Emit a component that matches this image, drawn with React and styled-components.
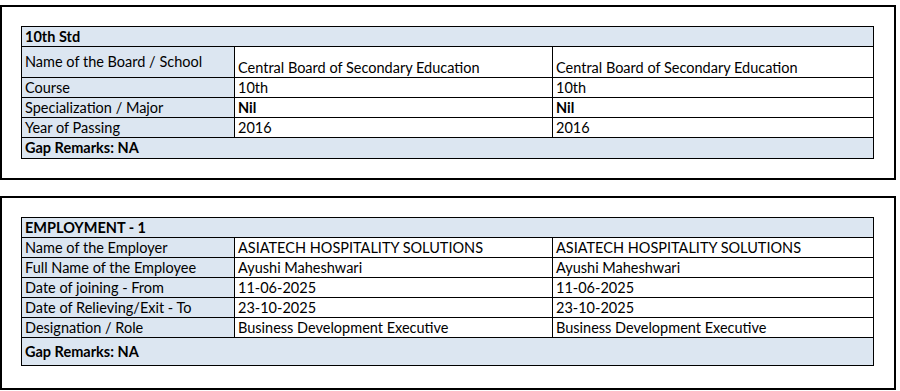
import React from "react";
import styled, { createGlobalStyle } from "styled-components";

const GlobalStyle = createGlobalStyle`
  html, body {
    margin: 0;
    padding: 0;
    background: #ffffff;
  }
  body {
    font-family: Lato, "Liberation Sans", sans-serif;
    color: #000;
  }
`;

const Page = styled.div`
  padding-top: 5px;
  width: 896px;
  display: flex;
  flex-direction: column;
  gap: 16px;
`;

const Section = styled.div`
  border: 2px solid #000;
  padding: ${(p) => p.$pad};
`;

const Table = styled.table`
  border-collapse: collapse;
  table-layout: fixed;
  width: 852px;
  font-size: 14.5px;
  line-height: 18px;
`;

const Head = styled.td`
  background: #dce6f1;
  border: 1px solid #000;
  font-weight: 700;
  padding: 0 3px;
  height: ${(p) => p.$h || 19}px;
  vertical-align: ${(p) => p.$va || "middle"};
`;

const Label = styled.td`
  background: #dce6f1;
  border: 1px solid #000;
  padding: 0 3px;
  height: ${(p) => p.$h || 19}px;
  vertical-align: ${(p) => p.$va || "middle"};
  white-space: nowrap;
`;

const LabelText = styled.div`
  padding-top: ${(p) => (p.$tall ? 6 : 0)}px;
`;

const Value = styled.td`
  border: 1px solid #000;
  padding: 0 3px;
  height: ${(p) => p.$h || 19}px;
  vertical-align: ${(p) => p.$va || "middle"};
  font-weight: ${(p) => (p.$bold ? 700 : 400)};
  white-space: nowrap;
`;

const education = [
  { label: "Name of the Board / School", value: "Central Board of Secondary Education", tall: true },
  { label: "Course", value: "10th" },
  { label: "Specialization / Major", value: "Nil", bold: true },
  { label: "Year of Passing", value: "2016" },
];

const employment = [
  { label: "Name of the Employer", value: "ASIATECH HOSPITALITY SOLUTIONS" },
  { label: "Full Name of the Employee", value: "Ayushi Maheshwari" },
  { label: "Date of joining - From", value: "11-06-2025" },
  { label: "Date of Relieving/Exit - To", value: "23-10-2025" },
  { label: "Designation / Role", value: "Business Development Executive" },
];

function DetailTable({ title, rows, gapHeight }) {
  return (
    <Table>
      <colgroup>
        <col style={{ width: 213 }} />
        <col style={{ width: 318 }} />
        <col style={{ width: 321 }} />
      </colgroup>
      <tbody>
        <tr>
          <Head colSpan={3}>{title}</Head>
        </tr>
        {rows.map((r) => (
          <tr key={r.label}>
            <Label $h={r.tall ? 30 : 19} $va={r.tall ? "top" : "middle"}>
              <LabelText $tall={r.tall}>{r.label}</LabelText>
            </Label>
            <Value $h={r.tall ? 30 : 19} $va={r.tall ? "bottom" : "middle"} $bold={r.bold}>
              {r.value}
            </Value>
            <Value $h={r.tall ? 30 : 19} $va={r.tall ? "bottom" : "middle"} $bold={r.bold}>
              {r.value}
            </Value>
          </tr>
        ))}
        <tr>
          <Head colSpan={3} $h={gapHeight}>
            Gap Remarks: NA
          </Head>
        </tr>
      </tbody>
    </Table>
  );
}

export default function App() {
  return (
    <>
      <GlobalStyle />
      <Page>
        <Section $pad="19px 21px 19px 19px">
          <DetailTable title="10th Std" rows={education} gapHeight={20} />
        </Section>
        <Section $pad="19px 21px 22px 19px">
          <DetailTable title="EMPLOYMENT - 1" rows={employment} gapHeight={27} />
        </Section>
      </Page>
    </>
  );
}
